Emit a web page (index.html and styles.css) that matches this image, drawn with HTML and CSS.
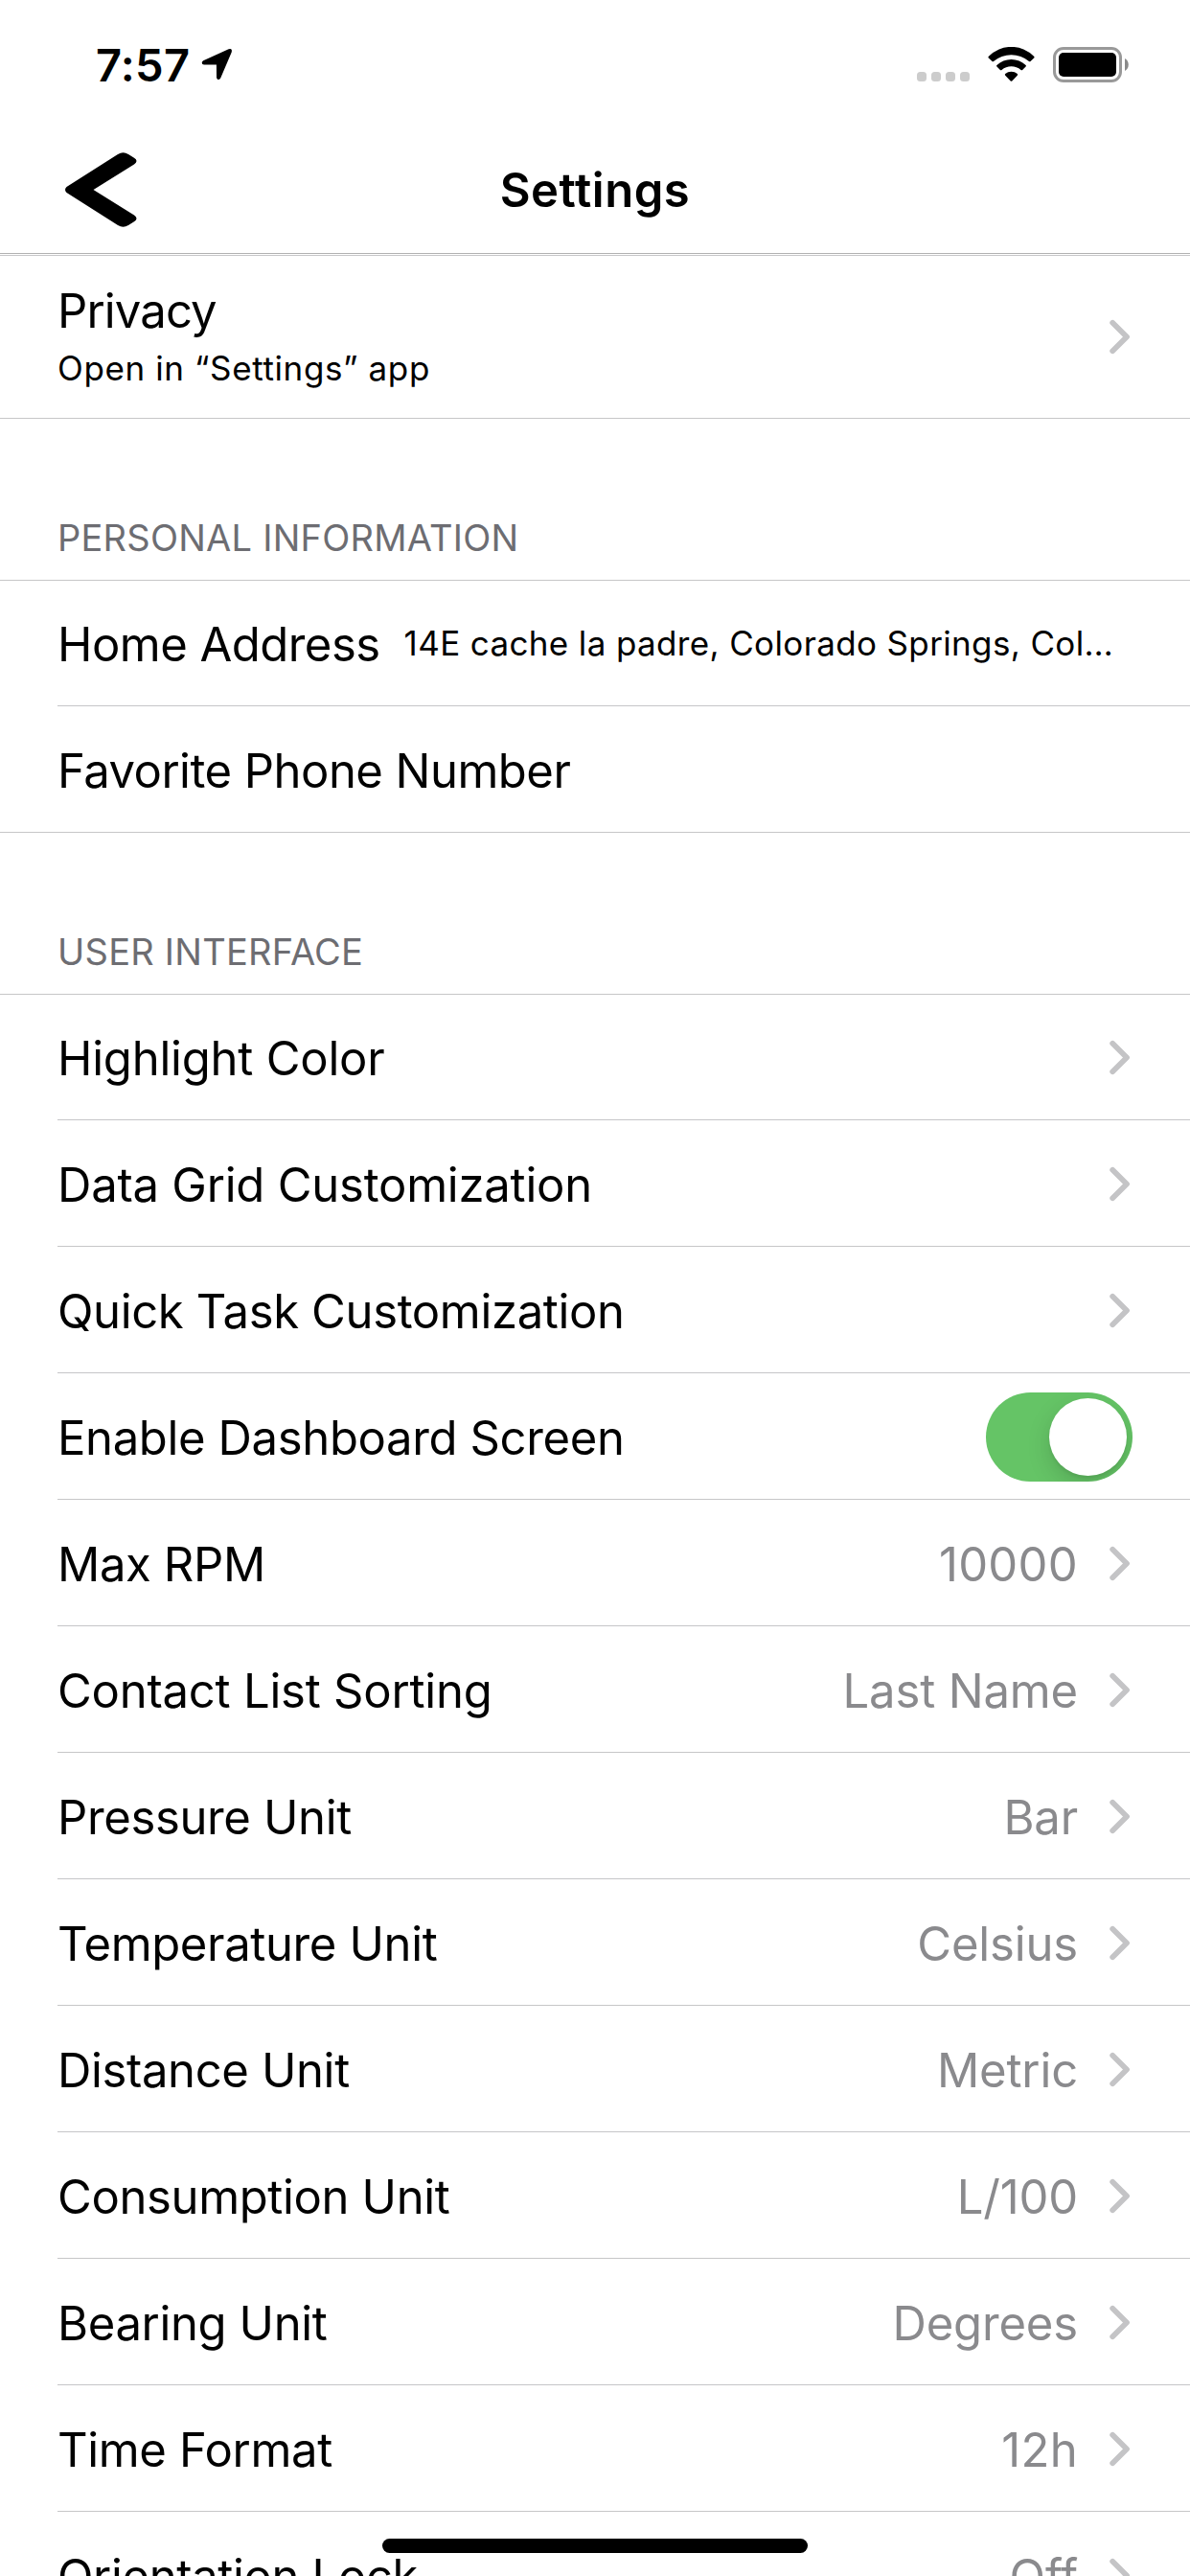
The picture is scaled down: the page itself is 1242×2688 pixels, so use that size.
FILE: index.html
```html
<!DOCTYPE html>
<html lang="en">
<head>
<meta charset="utf-8">
<title>Settings</title>
<link rel="stylesheet" href="styles.css">
</head>
<body>
<svg class="defs" aria-hidden="true">
  <symbol id="chevron" viewBox="0 0 22 37">
    <path d="M3.2 3.8 L18 18.5 L3.2 33.2" fill="none" stroke="#c4c4c6" stroke-width="5.8" stroke-linecap="round" stroke-linejoin="round"/>
  </symbol>
</svg>
<div class="screen">
  <header class="status-bar">
    <span class="time">7:57</span>
    <svg class="location" viewBox="0 0 33 34"><path d="M2.2 13.2 L28.6 1.3 Q32.8 0 31.7 4.6 L20.2 31.4 Q18.8 33.6 17 32.8 Q16 32.2 16 30.6 L15.9 17.6 L3 17.4 Q.8 17.2 .7 15.4 Q.8 13.9 2.2 13.2Z"/></svg>
    <div class="signal"><i></i><i></i><i></i><i></i></div>
    <svg class="wifi" viewBox="0 0 50 37">
      <path d="M.9 9.8 A33 33 0 0 1 48.1 9.8 Q49 10.6 48.2 11.4 L44.5 15 Q43.8 15.6 43 15 A28.5 28.5 0 0 0 6 15 Q5.2 15.6 4.5 15 L.8 11.4 Q0 10.6 .9 9.8Z"/>
      <path d="M9.4 19 A21.8 21.8 0 0 1 39.6 19 Q40.4 19.8 39.6 20.6 L36.1 24 Q35.3 24.7 34.5 24 A15.5 15.5 0 0 0 14.5 24 Q13.7 24.7 12.9 24 L9.4 20.6 Q8.6 19.8 9.4 19Z"/>
      <path d="M18.2 28.1 A9.4 9.4 0 0 1 30.8 28.1 Q31.6 28.9 30.8 29.7 L25.3 35.4 Q24.5 36.2 23.7 35.4 L18.2 29.7 Q17.4 28.9 18.2 28.1Z"/>
    </svg>
    <svg class="battery" viewBox="0 0 82 39">
      <rect x="2.5" y="2.5" width="69" height="34" rx="9.5" fill="none" stroke="#999" stroke-width="3"/>
      <rect x="7" y="7" width="60" height="25" rx="5"/>
      <path d="M76 13 A7.5 7.5 0 0 1 76 26Z" fill="#8a8a8a"/>
    </svg>
  </header>

  <nav class="nav-bar">
    <svg class="back" viewBox="0 0 78 80"><path d="M3.5 37 L57 3 Q62.5 -.5 68 3 L74 6.8 Q79 10 74 13.5 L31.5 40 L74 66.5 Q79 70 74 73.2 L68 77 Q62.5 80.5 57 77 L3.5 43 Q.5 40 3.5 37Z"/></svg>
    <h1 class="title">Settings</h1>
  </nav>

  <main class="list">
    <section class="group">
      <div class="row row-tall">
        <div class="stack">
          <span class="label">Privacy</span>
          <span class="subtitle">Open in “Settings” app</span>
        </div>
        <svg class="chevron"><use href="#chevron"/></svg>
      </div>
    </section>

    <h2 class="group-title">PERSONAL INFORMATION</h2>
    <section class="group">
      <div class="row"><span class="label label-tight">Home Address</span><span class="detail">14E cache la padre, Colorado Springs, Col…</span></div>
      <div class="row"><span class="label label-tight">Favorite Phone Number</span></div>
    </section>

    <h2 class="group-title">USER INTERFACE</h2>
    <section class="group">
      <div class="row"><span class="label label-loose">Highlight Color</span><svg class="chevron"><use href="#chevron"/></svg></div>
      <div class="row"><span class="label label-loose">Data Grid Customization</span><svg class="chevron"><use href="#chevron"/></svg></div>
      <div class="row"><span class="label">Quick Task Customization</span><svg class="chevron"><use href="#chevron"/></svg></div>
      <div class="row"><span class="label">Enable Dashboard Screen</span><span class="toggle"><span class="knob"></span></span></div>
      <div class="row"><span class="label">Max RPM</span><span class="value value-number">10000</span><svg class="chevron"><use href="#chevron"/></svg></div>
      <div class="row"><span class="label label-loose">Contact List Sorting</span><span class="value">Last Name</span><svg class="chevron"><use href="#chevron"/></svg></div>
      <div class="row"><span class="label">Pressure Unit</span><span class="value">Bar</span><svg class="chevron"><use href="#chevron"/></svg></div>
      <div class="row"><span class="label">Temperature Unit</span><span class="value">Celsius</span><svg class="chevron"><use href="#chevron"/></svg></div>
      <div class="row"><span class="label">Distance Unit</span><span class="value">Metric</span><svg class="chevron"><use href="#chevron"/></svg></div>
      <div class="row"><span class="label">Consumption Unit</span><span class="value">L/100</span><svg class="chevron"><use href="#chevron"/></svg></div>
      <div class="row"><span class="label">Bearing Unit</span><span class="value">Degrees</span><svg class="chevron"><use href="#chevron"/></svg></div>
      <div class="row"><span class="label">Time Format</span><span class="value value-number">12h</span><svg class="chevron"><use href="#chevron"/></svg></div>
      <div class="row"><span class="label">Orientation Lock</span><span class="value">Off</span><svg class="chevron"><use href="#chevron"/></svg></div>
    </section>
  </main>
  <div class="home-indicator"></div>
</div>
</body>
</html>
```
FILE: styles.css
```css
* {
  box-sizing: border-box;
}

body {
  margin: 0;
  background: #fff;
  color: #000;
  font-family: Inter, "Liberation Sans", sans-serif;
  font-weight: 400;
}

svg {
  display: block;
  flex: none;
}

.defs {
  position: absolute;
  width: 0;
  height: 0;
}

.screen {
  position: relative;
  width: 1242px;
  height: 2688px;
  overflow: hidden;
}

/* Status bar */
.status-bar {
  display: flex;
  align-items: flex-start;
  height: 132px;
  padding: 39px 62px 0 100px;
}

.time {
  width: 110px;
  font-size: 47px;
  font-weight: 600;
  line-height: 57px;
  letter-spacing: 0.3px;
  white-space: nowrap;
}

.location {
  width: 33px;
  height: 34px;
  margin-top: 11px;
}

.signal {
  display: flex;
  gap: 5px;
  margin: 36px 19px 0 auto;
}

.signal i {
  width: 10px;
  height: 10px;
  border-radius: 3.5px;
  background: #ccc;
}

.wifi {
  width: 50px;
  height: 37px;
  margin: 10px 17px 0 0;
}

.battery {
  width: 82px;
  height: 39px;
  margin-top: 9px;
}

/* Navigation bar */
.nav-bar {
  display: grid;
  grid-template-columns: 1fr auto 1fr;
  align-items: start;
  height: 133px;
  padding: 26px 66px 0;
  border-bottom: 1px solid #b2b2b2;
}

.back {
  width: 78px;
  height: 80px;
}

.title {
  margin: 11px 0 0;
  font-size: 49px;
  font-weight: 600;
  line-height: 59px;
  letter-spacing: 0.55px;
}

/* Grouped list */
.list {
  padding-top: 1px;
}

.group {
  border-top: 1px solid #c6c6c8;
}

.group-title {
  height: 168px;
  margin: 0;
  padding: 101px 60px 21px;
  color: #6d6d72;
  font-size: 38px;
  font-weight: 400;
  line-height: 46px;
  letter-spacing: 0.24px;
}

.row {
  display: flex;
  align-items: center;
  height: 132px;
  margin-left: 60px;
  padding-right: 60px;
  border-bottom: 1px solid #c6c6c8;
}

.row:first-child {
  height: 131px;
}

.row:last-child {
  margin-left: 0;
  padding-left: 60px;
}

.row.row-tall {
  height: 170px;
}

.stack {
  display: flex;
  flex-direction: column;
  gap: 9px;
  padding-bottom: 3px;
}

.label,
.value {
  padding-top: 4px;
  font-size: 49px;
  line-height: 59px;
  white-space: nowrap;
}

.row:first-child .label {
  padding-top: 3px;
}

.label {
  letter-spacing: -0.36px;
}

.label-tight {
  letter-spacing: -0.52px;
}

.label-loose {
  letter-spacing: -0.22px;
}

.row .stack .label {
  padding-top: 0;
  letter-spacing: -0.85px;
}

.subtitle {
  font-size: 35px;
  line-height: 42px;
  letter-spacing: 0.62px;
}

.detail {
  margin-left: 25px;
  font-size: 35px;
  line-height: 42px;
  letter-spacing: 0.36px;
  white-space: nowrap;
}

.value {
  margin-left: auto;
  margin-right: 33px;
  color: #8a8a8d;
  letter-spacing: -0.15px;
}

.value-number {
  letter-spacing: 0.3px;
}

.chevron {
  width: 22px;
  height: 37px;
  margin: 1px 2px 0 auto;
}

.row-tall .chevron {
  margin-top: -1px;
}

.value + .chevron {
  margin-left: 0;
}

.toggle {
  display: flex;
  justify-content: flex-end;
  width: 153px;
  height: 93px;
  margin: 2px 0 0 auto;
  padding: 6px;
  border-radius: 46.5px;
  background: #65c466;
  overflow: hidden;
}

.knob {
  width: 81px;
  height: 81px;
  border-radius: 50%;
  background: #fff;
  box-shadow: 0 9px 24px rgba(0, 0, 0, 0.15), 0 3px 3px rgba(0, 0, 0, 0.06);
}

.home-indicator {
  position: absolute;
  left: 399px;
  bottom: 24px;
  width: 444px;
  height: 15px;
  border-radius: 7.5px;
  background: #000;
}
```
